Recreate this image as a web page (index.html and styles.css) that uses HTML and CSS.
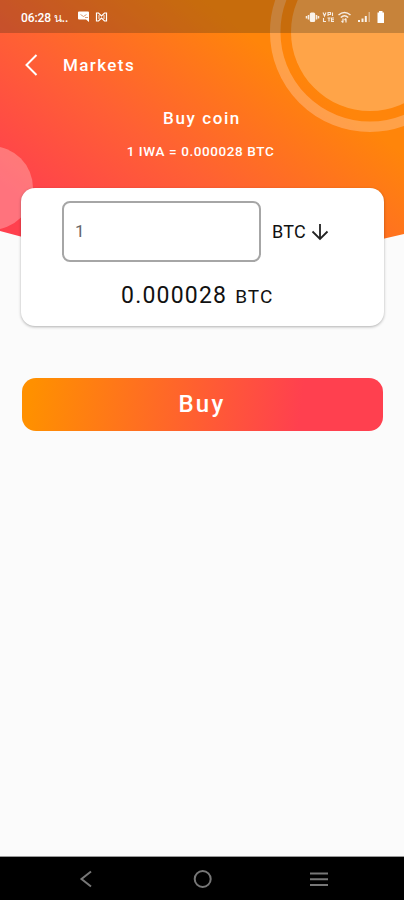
FILE: index.html
```html
<!DOCTYPE html>
<html lang="en">
<head>
  <meta charset="UTF-8">
  <meta name="viewport" content="width=device-width, initial-scale=1.0">
  <title>Buy coin</title>
  <link rel="stylesheet" href="styles.css">
</head>
<body>
  <div class="screen">
    <svg class="backdrop" viewBox="0 0 404 260">
      <defs>
        <linearGradient id="warm" gradientUnits="userSpaceOnUse" x1="300" y1="0" x2="100" y2="260">
          <stop offset="0.18" stop-color="#ff850a"/>
          <stop offset="0.62" stop-color="#ff6034"/>
          <stop offset="1" stop-color="#ff404e"/>
        </linearGradient>
        <clipPath id="header-shape">
          <path d="M0 0H404V234Q300 260 202 260Q100 260 0 231Z"/>
        </clipPath>
      </defs>
      <g clip-path="url(#header-shape)">
        <rect width="404" height="260" fill="url(#warm)"/>
        <circle cx="370" cy="32" r="79" fill="#ffd0a0" fill-opacity="0.42"/>
        <circle cx="370" cy="32" r="94.8" fill="none" stroke="#ffd8c0" stroke-opacity="0.34" stroke-width="10.5"/>
        <circle cx="-9" cy="188" r="42" fill="#fff" fill-opacity="0.27"/>
      </g>
    </svg>

    <div class="status-bar">
      <span class="time">06:28 น..</span>
      <svg class="status-left" viewBox="0 0 32 14">
        <path d="M2 1.500H11Q12 1.500 12 2.500V12L9 9.500H2Q1 9.500 1 8.500V2.500Q1 1.500 2 1.500Z" fill="#fff"/>
        <path d="M3.500 4.500l3 2 3-2M8 7.500h3" fill="none" stroke="#c9672b" stroke-opacity="0.7" stroke-width="0.900"/>
        <path d="M19.500 11V3H21.500L24.500 6 27.500 3H29.500V11H27.500L24.500 8 21.500 11Z" fill="none" stroke="#fff" stroke-width="1.200"/>
        <path d="M22 5V9M27 5V9" stroke="#fff" stroke-width="0.900"/>
      </svg>
      <svg class="status-right" viewBox="0 0 80 16">
        <g fill="none" stroke="#fff" stroke-opacity="0.85" stroke-width="1.500">
          <path d="M1.500 7V9.500M3.500 6V10.500M11.500 6V10.500M13.500 7V9.500"/>
          <path d="M18 3.500l1.500 3.500 1.500-3.500M23 7V3.500h2.500V5.500H23M27.500 3.500V7M18.500 9v3.500H21M22.500 9H25.500M24 9v3.500M29 9H26.500v3.500H29M26.500 10.800H29" stroke-width="1.100"/>
          <path d="M33.500 6Q39.500 1 45.500 6M35.800 8.500Q39.500 5 43.200 8.500"/>
          <path d="M38 9.500V13.500M36.500 12L38 13.500M41 13.500V9.500M39.500 11L41 9.500" stroke-width="1.200"/>
        </g>
        <rect x="4.800" y="3.500" width="5.400" height="9.500" rx="1.500" fill="#fff" fill-opacity="0.9"/>
        <path d="M53 11h2v2h-2zM56.500 9.500h2V13h-2zM59.800 7h2v6h-2z" fill="#fff" fill-opacity="0.9"/>
        <path d="M63.500 3h1.500v10h-1.500z" fill="#fff" fill-opacity="0.4"/>
        <path d="M74 2h3.500v1.500H79V14H72.500V3.500H74Z" fill="#fff"/>
      </svg>
    </div>

    <div class="nav">
      <svg class="back" viewBox="0 0 14 22">
        <path d="M12.500 1L2.500 11l10 10" fill="none" stroke="#fff" stroke-width="2"/>
      </svg>
      <span class="nav-title">Markets</span>
    </div>

    <h1>Buy coin</h1>
    <p class="rate">1 IWA = 0.000028 BTC</p>

    <div class="card">
      <div class="amount-row">
        <input class="amount" type="text" value="1">
        <div class="coin">
          <span>BTC</span>
          <svg class="arrow" viewBox="0 0 18 18">
            <path d="M9 1V16M1.500 8.500L9 16l7.500-7.500" fill="none" stroke="#222" stroke-width="1.800"/>
          </svg>
        </div>
      </div>
      <div class="total"><span class="value">0.000028</span><span class="unit">BTC</span></div>
    </div>

    <button class="buy" type="button">Buy</button>

    <div class="system-nav">
      <svg viewBox="0 0 20 20"><path d="M14 2.500L4.500 10l9.500 7.500"/></svg>
      <svg viewBox="0 0 20 20"><circle cx="9.700" cy="10" r="8"/></svg>
      <svg viewBox="0 0 20 20"><path d="M1 4.500H19M1 10.200H19M1 16H19"/></svg>
    </div>
  </div>
</body>
</html>
```
FILE: styles.css
```css
* {
  box-sizing: border-box;
}

body {
  margin: 0;
  font-family: Roboto, "Noto Sans", sans-serif;
  background: #fbfbfb;
}

.screen {
  position: relative;
  display: flex;
  flex-direction: column;
  width: 404px;
  height: 900px;
  overflow: hidden;
}

.backdrop {
  position: absolute;
  top: 0;
  left: 0;
  z-index: -1;
  width: 404px;
  height: 260px;
}

.status-bar {
  display: flex;
  align-items: center;
  height: 33px;
  padding: 1px 19px 0 21px;
  background: rgba(40, 40, 20, 0.26);
  color: #fff;
}

.time {
  width: 56px;
  font-size: 12px;
  font-weight: 500;
  letter-spacing: -0.1px;
  white-space: nowrap;
}

.status-left {
  width: 32px;
  height: 14px;
}

.status-right {
  width: 80px;
  height: 16px;
  margin-left: auto;
}

.nav {
  display: flex;
  align-items: center;
  height: 64px;
  padding-left: 24px;
  color: #fff;
}

.back {
  width: 14px;
  height: 22px;
  margin-right: 25px;
}

.nav-title {
  font-size: 17px;
  font-weight: 500;
  letter-spacing: 1.4px;
}

h1 {
  margin: 11px 0 0;
  color: #fff;
  font-size: 17px;
  font-weight: 500;
  line-height: 20px;
  letter-spacing: 1.6px;
  text-align: center;
}

.rate {
  margin: 15px 0 0;
  padding-right: 3px;
  color: #fff;
  font-size: 13.5px;
  font-weight: 500;
  line-height: 16px;
  letter-spacing: 0.6px;
  text-align: center;
}

.card {
  width: 363px;
  height: 138px;
  margin: 29px 0 0 21px;
  padding: 13px 0 0 41px;
  border-radius: 14px;
  background: #fff;
  box-shadow: 0 1px 3px rgba(0, 0, 0, 0.3);
}

.amount-row {
  display: flex;
  align-items: center;
}

.amount {
  width: 199px;
  height: 61px;
  padding: 0 11px 2px;
  border: 2px solid #a6a6a6;
  border-radius: 8px;
  background: #fff;
  color: #666;
  font-family: inherit;
  font-size: 17px;
}

.coin {
  display: flex;
  align-items: center;
  margin-left: 11px;
  color: #111;
  font-size: 18px;
  letter-spacing: 0.3px;
}

.arrow {
  width: 18px;
  height: 18px;
  margin-left: 5px;
}

.total {
  display: flex;
  align-items: baseline;
  margin: 20px 0 0 59px;
  color: #111;
  line-height: 28px;
}

.value {
  font-size: 23px;
  letter-spacing: 1.2px;
}

.unit {
  margin-left: 8px;
  font-size: 19px;
  letter-spacing: 1.1px;
}

.buy {
  width: 361px;
  height: 53px;
  margin: 52px 0 0 22px;
  padding: 0 1px 1px 0;
  border: none;
  border-radius: 14px;
  background: linear-gradient(97deg, #ff9000 3%, #ff404f 77%);
  color: #fff;
  font-family: inherit;
  font-size: 24px;
  font-weight: 500;
  letter-spacing: 2.3px;
}

.system-nav {
  display: flex;
  align-items: center;
  gap: 96px;
  height: 44px;
  margin-top: auto;
  padding-left: 77px;
  border-top: 1px solid #999;
  background: #000;
}

.system-nav svg {
  width: 20px;
  height: 20px;
  fill: none;
  stroke: #777;
  stroke-width: 2;
}
```
